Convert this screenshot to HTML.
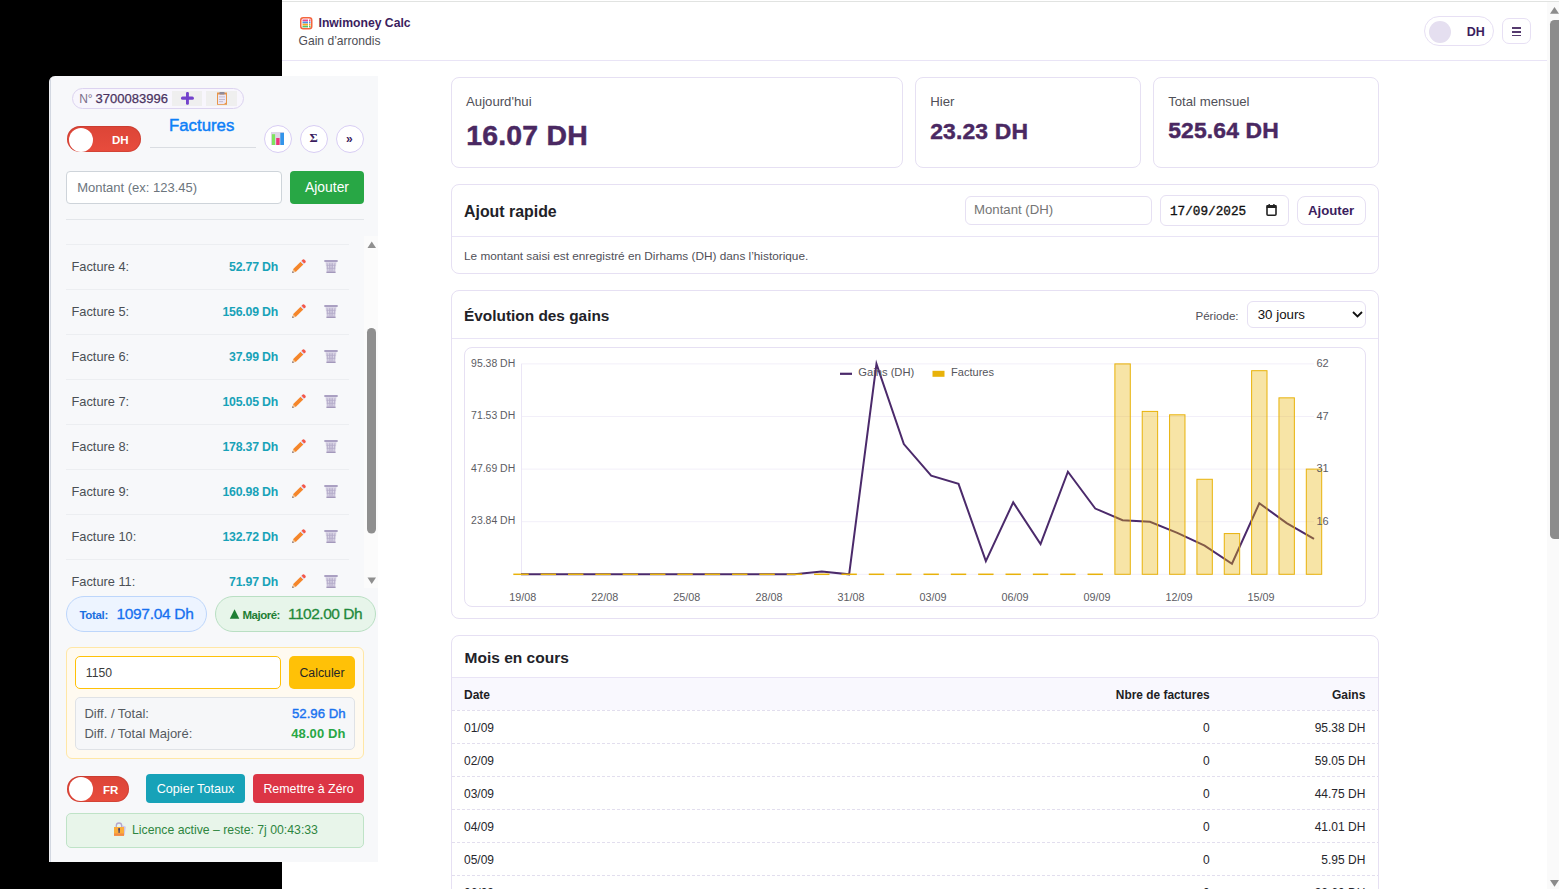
<!DOCTYPE html>
<html><head><meta charset="utf-8">
<style>
*{box-sizing:border-box;margin:0;padding:0}
html,body{width:1559px;height:889px;overflow:hidden;background:#fff;font-family:"Liberation Sans",sans-serif}
.abs{position:absolute}
.t{position:absolute;white-space:nowrap}
svg{position:absolute;left:0;top:0}
</style></head><body>

<div class="abs" style="left:0px;top:0px;width:282px;height:889px;background:#000"></div>
<div class="abs" style="left:282px;top:1px;width:1277px;height:1px;background:#e1e3e1"></div>
<div class="abs" style="left:282px;top:60px;width:1265px;height:1px;background:#e9e4f6"></div>
<svg width="1559" height="60" style="left:0;top:0">
<rect x="300.75" y="17.75" width="11" height="11" rx="2.5" fill="#fff" stroke="#f4653e" stroke-width="1.5"/>
<rect x="302.5" y="19.5" width="5.5" height="1.8" fill="#e8488a"/><rect x="309" y="19.5" width="1.5" height="1.8" fill="#e8488a"/>
<rect x="302.5" y="21.6" width="5.5" height="1.8" fill="#4a90e2"/><rect x="309" y="21.6" width="1.5" height="1.8" fill="#4a90e2"/>
<rect x="302.5" y="23.7" width="5.5" height="1.8" fill="#f5a623"/><rect x="309" y="23.7" width="1.5" height="1.8" fill="#f5a623"/>
<rect x="302.5" y="25.8" width="5.5" height="1.6" fill="#4cc26b"/><rect x="309" y="25.8" width="1.5" height="1.6" fill="#4cc26b"/>
</svg>
<div class="t" style="left:318.50px;top:16.17px;font-size:12.2px;line-height:15px;color:#3b1d5e;font-weight:bold;">Inwimoney Calc</div>
<div class="t" style="left:298.50px;top:34.10px;font-size:12.1px;line-height:15px;color:#4e4e55;">Gain d’arrondis</div>
<div class="abs" style="left:1424px;top:16px;width:70px;height:30px;border:1px solid #e7e0f4;border-radius:15px"></div>
<div class="abs" style="left:1429px;top:21px;width:22px;height:22px;border-radius:50%;background:#e5dff0"></div>
<div class="t" style="left:1466.70px;top:24.77px;font-size:12.5px;line-height:15px;color:#3b1d5e;font-weight:bold;">DH</div>
<div class="abs" style="left:1502px;top:18px;width:29px;height:26px;border:1px solid #e7e0f4;border-radius:7px"></div>
<div class="abs" style="left:1511.7px;top:27.2px;width:9.6px;height:1.6px;background:#553a6e"></div>
<div class="abs" style="left:1511.7px;top:31px;width:9.6px;height:1.6px;background:#553a6e"></div>
<div class="abs" style="left:1511.7px;top:34.7px;width:9.6px;height:1.6px;background:#553a6e"></div>
<div class="abs" style="left:451px;top:77px;width:452px;height:91px;border:1px solid #e6e0f3;border-radius:8px;background:#fff"></div>
<div class="abs" style="left:915px;top:77px;width:226px;height:91px;border:1px solid #e6e0f3;border-radius:8px;background:#fff"></div>
<div class="abs" style="left:1153px;top:77px;width:226px;height:91px;border:1px solid #e6e0f3;border-radius:8px;background:#fff"></div>
<div class="t" style="left:466.00px;top:93.92px;font-size:13.2px;line-height:16px;color:#505058;">Aujourd'hui</div>
<div class="t" style="left:466.30px;top:118.45px;font-size:28.4px;line-height:34px;color:#4a2862;font-weight:bold;letter-spacing:0.2px;-webkit-text-stroke:0.5px #4a2862;">16.07 DH</div>
<div class="t" style="left:930.20px;top:94.22px;font-size:13.2px;line-height:16px;color:#505058;">Hier</div>
<div class="t" style="left:930.20px;top:118.16px;font-size:22.9px;line-height:27px;color:#4a2862;font-weight:bold;letter-spacing:0.15px;-webkit-text-stroke:0.45px #4a2862;">23.23 DH</div>
<div class="t" style="left:1168.20px;top:94.22px;font-size:13.2px;line-height:16px;color:#505058;">Total mensuel</div>
<div class="t" style="left:1168.20px;top:117.36px;font-size:22.9px;line-height:27px;color:#4a2862;font-weight:bold;letter-spacing:0.15px;-webkit-text-stroke:0.45px #4a2862;">525.64 DH</div>
<div class="abs" style="left:451px;top:184px;width:928px;height:90px;border:1px solid #e6e0f3;border-radius:8px;background:#fff"></div>
<div class="abs" style="left:452px;top:236px;width:926px;height:1px;background:#e9e4f6"></div>
<div class="t" style="left:464.00px;top:201.99px;font-size:15.9px;line-height:19px;color:#222228;font-weight:bold;">Ajout rapide</div>
<div class="abs" style="left:965px;top:196px;width:187px;height:29px;border:1px solid #e6e0f3;border-radius:6px;background:#fff"></div>
<div class="t" style="left:974.00px;top:202.42px;font-size:13.2px;line-height:16px;color:#757575;">Montant (DH)</div>
<div class="abs" style="left:1160px;top:195px;width:129px;height:31px;border:1px solid #e6e0f3;border-radius:6px;background:#fff"></div>
<div class="t" style="left:1170.00px;top:204.32px;font-size:12.7px;line-height:15px;color:#111;font-family:'Liberation Mono',monospace;-webkit-text-stroke:0.35px #111;">17/09/2025</div>
<svg width="1559" height="889"><g fill="none" stroke="#222" stroke-width="1.6"><rect x="1267" y="206" width="9" height="9.2" rx="1"/></g><rect x="1266.5" y="205" width="10" height="3" fill="#222"/><rect x="1268.5" y="204" width="1.4" height="2" fill="#222"/><rect x="1273.2" y="204" width="1.4" height="2" fill="#222"/></svg>
<div class="abs" style="left:1297px;top:196px;width:69px;height:29px;border:1px solid #e6e0f3;border-radius:8px;background:#fff"></div>
<div class="t" style="left:1308.00px;top:202.62px;font-size:13.2px;line-height:16px;color:#3b1d5e;font-weight:bold;">Ajouter</div>
<div class="t" style="left:464.00px;top:249.21px;font-size:11.8px;line-height:14px;color:#505058;">Le montant saisi est enregistré en Dirhams (DH) dans l’historique.</div>
<div class="abs" style="left:451px;top:290px;width:928px;height:329px;border:1px solid #e6e0f3;border-radius:8px;background:#fff"></div>
<div class="abs" style="left:452px;top:338px;width:926px;height:1px;background:#e9e4f6"></div>
<div class="t" style="left:464.00px;top:306.66px;font-size:15.4px;line-height:18px;color:#222228;font-weight:bold;">Évolution des gains</div>
<div class="t" style="left:638.60px;width:600px;text-align:right;top:308.88px;font-size:11.6px;line-height:14px;color:#505058;">Période:</div>
<div class="abs" style="left:1247px;top:301px;width:119px;height:27px;border:1px solid #e6e0f3;border-radius:6px;background:#fff"></div>
<div class="t" style="left:1257.70px;top:307.19px;font-size:13.3px;line-height:16px;color:#111;">30 jours</div>
<svg width="1559" height="889"><path d="M1353 312 L1357.5 316.5 L1362 312" fill="none" stroke="#111" stroke-width="1.8"/></svg>
<div class="abs" style="left:464px;top:347px;width:902px;height:260px;border:1px solid #e6e0f3;border-radius:8px;background:#fff"></div>
<svg width="1559" height="889">
<line x1="521" y1="363.9" x2="1314" y2="363.9" stroke="#f2eff9" stroke-width="1"/>
<line x1="521" y1="416.5" x2="1314" y2="416.5" stroke="#f2eff9" stroke-width="1"/>
<line x1="521" y1="469.1" x2="1314" y2="469.1" stroke="#f2eff9" stroke-width="1"/>
<line x1="521" y1="521.7" x2="1314" y2="521.7" stroke="#f2eff9" stroke-width="1"/>
<line x1="521" y1="574.3" x2="1314" y2="574.3" stroke="#f2eff9" stroke-width="1"/>
<line x1="521.5" y1="364" x2="521.5" y2="574.5" stroke="#ebe6f6" stroke-width="1"/>
<polyline points="521.00,574.30 548.34,574.30 575.69,574.30 603.03,574.30 630.38,574.30 657.72,574.30 685.07,574.30 712.41,574.30 739.76,574.30 767.10,574.30 794.45,574.30 821.79,571.50 849.14,574.30 876.48,363.90 903.83,444.04 931.17,475.59 958.52,483.84 985.86,561.17 1013.21,502.39 1040.55,544.08 1067.90,471.73 1095.24,508.56 1122.59,520.26 1149.93,521.80 1177.28,532.83 1204.62,545.62 1231.97,563.71 1259.31,503.27 1286.66,523.06 1314.00,538.85" fill="none" stroke="#4b2a6b" stroke-width="2" stroke-linejoin="miter" stroke-miterlimit="10"/>
<line x1="513.30" y1="574.3" x2="528.70" y2="574.3" stroke="#e8b20a" stroke-width="1.5"/>
<line x1="540.64" y1="574.3" x2="556.04" y2="574.3" stroke="#e8b20a" stroke-width="1.5"/>
<line x1="567.99" y1="574.3" x2="583.39" y2="574.3" stroke="#e8b20a" stroke-width="1.5"/>
<line x1="595.33" y1="574.3" x2="610.73" y2="574.3" stroke="#e8b20a" stroke-width="1.5"/>
<line x1="622.68" y1="574.3" x2="638.08" y2="574.3" stroke="#e8b20a" stroke-width="1.5"/>
<line x1="650.02" y1="574.3" x2="665.42" y2="574.3" stroke="#e8b20a" stroke-width="1.5"/>
<line x1="677.37" y1="574.3" x2="692.77" y2="574.3" stroke="#e8b20a" stroke-width="1.5"/>
<line x1="704.71" y1="574.3" x2="720.11" y2="574.3" stroke="#e8b20a" stroke-width="1.5"/>
<line x1="732.06" y1="574.3" x2="747.46" y2="574.3" stroke="#e8b20a" stroke-width="1.5"/>
<line x1="759.40" y1="574.3" x2="774.80" y2="574.3" stroke="#e8b20a" stroke-width="1.5"/>
<line x1="786.75" y1="574.3" x2="802.15" y2="574.3" stroke="#e8b20a" stroke-width="1.5"/>
<line x1="814.09" y1="574.3" x2="829.49" y2="574.3" stroke="#e8b20a" stroke-width="1.5"/>
<line x1="841.44" y1="574.3" x2="856.84" y2="574.3" stroke="#e8b20a" stroke-width="1.5"/>
<line x1="868.78" y1="574.3" x2="884.18" y2="574.3" stroke="#e8b20a" stroke-width="1.5"/>
<line x1="896.13" y1="574.3" x2="911.53" y2="574.3" stroke="#e8b20a" stroke-width="1.5"/>
<line x1="923.47" y1="574.3" x2="938.87" y2="574.3" stroke="#e8b20a" stroke-width="1.5"/>
<line x1="950.82" y1="574.3" x2="966.22" y2="574.3" stroke="#e8b20a" stroke-width="1.5"/>
<line x1="978.16" y1="574.3" x2="993.56" y2="574.3" stroke="#e8b20a" stroke-width="1.5"/>
<line x1="1005.51" y1="574.3" x2="1020.91" y2="574.3" stroke="#e8b20a" stroke-width="1.5"/>
<line x1="1032.85" y1="574.3" x2="1048.25" y2="574.3" stroke="#e8b20a" stroke-width="1.5"/>
<line x1="1060.20" y1="574.3" x2="1075.60" y2="574.3" stroke="#e8b20a" stroke-width="1.5"/>
<line x1="1087.54" y1="574.3" x2="1102.94" y2="574.3" stroke="#e8b20a" stroke-width="1.5"/>
<rect x="1114.89" y="363.90" width="15.4" height="210.40" fill="rgba(234,179,8,0.36)" stroke="#e8b20a" stroke-width="1"/>
<rect x="1142.23" y="411.41" width="15.4" height="162.89" fill="rgba(234,179,8,0.36)" stroke="#e8b20a" stroke-width="1"/>
<rect x="1169.58" y="414.80" width="15.4" height="159.50" fill="rgba(234,179,8,0.36)" stroke="#e8b20a" stroke-width="1"/>
<rect x="1196.92" y="479.28" width="15.4" height="95.02" fill="rgba(234,179,8,0.36)" stroke="#e8b20a" stroke-width="1"/>
<rect x="1224.27" y="533.58" width="15.4" height="40.72" fill="rgba(234,179,8,0.36)" stroke="#e8b20a" stroke-width="1"/>
<rect x="1251.61" y="370.69" width="15.4" height="203.61" fill="rgba(234,179,8,0.36)" stroke="#e8b20a" stroke-width="1"/>
<rect x="1278.96" y="397.84" width="15.4" height="176.46" fill="rgba(234,179,8,0.36)" stroke="#e8b20a" stroke-width="1"/>
<rect x="1306.30" y="469.10" width="15.4" height="105.20" fill="rgba(234,179,8,0.36)" stroke="#e8b20a" stroke-width="1"/>
<rect x="840" y="372.7" width="12" height="2.2" fill="#4b2a6b"/>
<rect x="932.5" y="370.8" width="12" height="6" fill="#e8b20a"/>
</svg>
<div class="t" style="left:858.30px;top:366.42px;font-size:11.2px;line-height:13px;color:#55555c;">Gains (DH)</div>
<div class="t" style="left:951.00px;top:366.47px;font-size:11.05px;line-height:13px;color:#55555c;">Factures</div>
<div class="t" style="left:-84.80px;width:600px;text-align:right;top:356.68px;font-size:10.45px;line-height:13px;color:#5c5c63;">95.38 DH</div>
<div class="t" style="left:-84.80px;width:600px;text-align:right;top:409.28px;font-size:10.45px;line-height:13px;color:#5c5c63;">71.53 DH</div>
<div class="t" style="left:-84.80px;width:600px;text-align:right;top:461.88px;font-size:10.45px;line-height:13px;color:#5c5c63;">47.69 DH</div>
<div class="t" style="left:-84.80px;width:600px;text-align:right;top:514.48px;font-size:10.45px;line-height:13px;color:#5c5c63;">23.84 DH</div>
<div class="t" style="left:1316.40px;top:357.29px;font-size:11px;line-height:13px;color:#5c5c63;">62</div>
<div class="t" style="left:1316.40px;top:409.89px;font-size:11px;line-height:13px;color:#5c5c63;">47</div>
<div class="t" style="left:1316.40px;top:462.49px;font-size:11px;line-height:13px;color:#5c5c63;">31</div>
<div class="t" style="left:1316.40px;top:515.09px;font-size:11px;line-height:13px;color:#5c5c63;">16</div>
<div class="t" style="left:222.80px;width:600px;text-align:center;top:590.76px;font-size:10.8px;line-height:13px;color:#5c5c63;">19/08</div>
<div class="t" style="left:304.83px;width:600px;text-align:center;top:590.76px;font-size:10.8px;line-height:13px;color:#5c5c63;">22/08</div>
<div class="t" style="left:386.87px;width:600px;text-align:center;top:590.76px;font-size:10.8px;line-height:13px;color:#5c5c63;">25/08</div>
<div class="t" style="left:468.90px;width:600px;text-align:center;top:590.76px;font-size:10.8px;line-height:13px;color:#5c5c63;">28/08</div>
<div class="t" style="left:550.94px;width:600px;text-align:center;top:590.76px;font-size:10.8px;line-height:13px;color:#5c5c63;">31/08</div>
<div class="t" style="left:632.97px;width:600px;text-align:center;top:590.76px;font-size:10.8px;line-height:13px;color:#5c5c63;">03/09</div>
<div class="t" style="left:715.01px;width:600px;text-align:center;top:590.76px;font-size:10.8px;line-height:13px;color:#5c5c63;">06/09</div>
<div class="t" style="left:797.04px;width:600px;text-align:center;top:590.76px;font-size:10.8px;line-height:13px;color:#5c5c63;">09/09</div>
<div class="t" style="left:879.08px;width:600px;text-align:center;top:590.76px;font-size:10.8px;line-height:13px;color:#5c5c63;">12/09</div>
<div class="t" style="left:961.11px;width:600px;text-align:center;top:590.76px;font-size:10.8px;line-height:13px;color:#5c5c63;">15/09</div>
<div class="abs" style="left:451px;top:635px;width:928px;height:300px;border:1px solid #e6e0f3;border-radius:8px;background:#fff"></div>
<div class="abs" style="left:452px;top:677px;width:926px;height:33px;background:#f9f8fe;border-top:1px solid #e9e4f6"></div>
<div class="t" style="left:464.60px;top:648.13px;font-size:15.5px;line-height:19px;color:#222228;font-weight:bold;">Mois en cours</div>
<div class="t" style="left:464.00px;top:687.84px;font-size:12px;line-height:14px;color:#1e1e24;font-weight:bold;">Date</div>
<div class="t" style="left:609.70px;width:600px;text-align:right;top:687.87px;font-size:11.9px;line-height:14px;color:#1e1e24;font-weight:bold;">Nbre de factures</div>
<div class="t" style="left:765.40px;width:600px;text-align:right;top:687.84px;font-size:12px;line-height:14px;color:#1e1e24;font-weight:bold;">Gains</div>
<div class="abs" style="left:452px;top:710px;width:926px;height:1px;background-image:linear-gradient(90deg,#e2deee 60%,transparent 60%);background-size:5px 1px"></div>
<div class="t" style="left:464.00px;top:720.74px;font-size:12px;line-height:14px;color:#26262c;">01/09</div>
<div class="t" style="left:609.70px;width:600px;text-align:right;top:720.74px;font-size:12px;line-height:14px;color:#26262c;">0</div>
<div class="t" style="left:765.40px;width:600px;text-align:right;top:720.74px;font-size:12px;line-height:14px;color:#26262c;">95.38 DH</div>
<div class="abs" style="left:452px;top:743px;width:926px;height:1px;background-image:linear-gradient(90deg,#e2deee 60%,transparent 60%);background-size:5px 1px"></div>
<div class="t" style="left:464.00px;top:753.74px;font-size:12px;line-height:14px;color:#26262c;">02/09</div>
<div class="t" style="left:609.70px;width:600px;text-align:right;top:753.74px;font-size:12px;line-height:14px;color:#26262c;">0</div>
<div class="t" style="left:765.40px;width:600px;text-align:right;top:753.74px;font-size:12px;line-height:14px;color:#26262c;">59.05 DH</div>
<div class="abs" style="left:452px;top:776px;width:926px;height:1px;background-image:linear-gradient(90deg,#e2deee 60%,transparent 60%);background-size:5px 1px"></div>
<div class="t" style="left:464.00px;top:786.74px;font-size:12px;line-height:14px;color:#26262c;">03/09</div>
<div class="t" style="left:609.70px;width:600px;text-align:right;top:786.74px;font-size:12px;line-height:14px;color:#26262c;">0</div>
<div class="t" style="left:765.40px;width:600px;text-align:right;top:786.74px;font-size:12px;line-height:14px;color:#26262c;">44.75 DH</div>
<div class="abs" style="left:452px;top:809px;width:926px;height:1px;background-image:linear-gradient(90deg,#e2deee 60%,transparent 60%);background-size:5px 1px"></div>
<div class="t" style="left:464.00px;top:819.74px;font-size:12px;line-height:14px;color:#26262c;">04/09</div>
<div class="t" style="left:609.70px;width:600px;text-align:right;top:819.74px;font-size:12px;line-height:14px;color:#26262c;">0</div>
<div class="t" style="left:765.40px;width:600px;text-align:right;top:819.74px;font-size:12px;line-height:14px;color:#26262c;">41.01 DH</div>
<div class="abs" style="left:452px;top:842px;width:926px;height:1px;background-image:linear-gradient(90deg,#e2deee 60%,transparent 60%);background-size:5px 1px"></div>
<div class="t" style="left:464.00px;top:852.74px;font-size:12px;line-height:14px;color:#26262c;">05/09</div>
<div class="t" style="left:609.70px;width:600px;text-align:right;top:852.74px;font-size:12px;line-height:14px;color:#26262c;">0</div>
<div class="t" style="left:765.40px;width:600px;text-align:right;top:852.74px;font-size:12px;line-height:14px;color:#26262c;">5.95 DH</div>
<div class="abs" style="left:452px;top:875px;width:926px;height:1px;background-image:linear-gradient(90deg,#e2deee 60%,transparent 60%);background-size:5px 1px"></div>
<div class="t" style="left:464.00px;top:885.74px;font-size:12px;line-height:14px;color:#26262c;">06/09</div>
<div class="t" style="left:609.70px;width:600px;text-align:right;top:885.74px;font-size:12px;line-height:14px;color:#26262c;">0</div>
<div class="t" style="left:765.40px;width:600px;text-align:right;top:885.74px;font-size:12px;line-height:14px;color:#26262c;">32.60 DH</div>
<div class="abs" style="left:49px;top:76px;width:329px;height:786px;background:#f7f8fa;border-top-left-radius:6px;border-left:1px solid #eeeff3"></div>
<div class="abs" style="left:50px;top:79px;width:1px;height:783px;background:#d3d8e1"></div>
<div class="abs" style="left:72px;top:88px;width:172px;height:21px;border:1px solid #dcd3f0;border-radius:11px;background:#f8f6fd"></div>
<div class="t" style="left:79.20px;top:92.14px;font-size:12px;line-height:14px;color:#7a6e8a;">N°</div>
<div class="t" style="left:95.60px;top:90.79px;font-size:13px;line-height:16px;color:#4a3260;-webkit-text-stroke:0.25px #4a3260;">3700083996</div>
<div class="abs" style="left:172px;top:91px;width:30px;height:15px;background:#efefef"></div>
<div class="abs" style="left:206px;top:91px;width:31px;height:15px;background:#efefef"></div>
<svg width="1559" height="889">
<rect x="186" y="92" width="2.9" height="12.8" rx="1.2" fill="#7443cc"/>
<rect x="181" y="96.4" width="12.9" height="3.4" rx="1.5" fill="#7443cc"/>
<rect x="217" y="92.5" width="10" height="12.3" fill="#e8964a"/>
<path d="M218 94.5 H226 V102.5 L224 104 H218 Z" fill="#ebe6f5"/>
<rect x="219.3" y="92" width="5.4" height="2.6" rx="1" fill="#8e8a99"/>
<rect x="219" y="96.5" width="6" height="0.8" fill="#b9b3c6"/>
<rect x="219" y="99" width="6" height="0.8" fill="#b9b3c6"/>
<rect x="219" y="101.3" width="4" height="0.8" fill="#b9b3c6"/>
</svg>
<div class="abs" style="left:67px;top:126px;width:74px;height:26px;border-radius:13px;background:linear-gradient(#dc4537,#e84c3d);box-shadow:inset 0 0 0 1px rgba(150,40,30,0.25)"></div>
<div class="abs" style="left:69px;top:127.5px;width:24px;height:24px;border-radius:50%;background:#fff"></div>
<div class="t" style="left:112.00px;top:132.51px;font-size:11.5px;line-height:14px;color:#fff;font-weight:bold;">DH</div>
<div class="t" style="left:169.00px;top:116.38px;font-size:16.8px;line-height:20px;color:#0d7ff7;-webkit-text-stroke:0.45px #0d7ff7;">Factures</div>
<div class="abs" style="left:150px;top:147px;width:106px;height:1px;background:#dadde2"></div>
<div class="abs" style="left:264px;top:125px;width:28px;height:28px;border:1px solid #d8cdf4;border-radius:50%;background:#fff"></div>
<div class="abs" style="left:300px;top:125px;width:28px;height:28px;border:1px solid #d8cdf4;border-radius:50%;background:#fff"></div>
<div class="abs" style="left:336px;top:125px;width:28px;height:28px;border:1px solid #d8cdf4;border-radius:50%;background:#fff"></div>
<svg width="1559" height="889">
<rect x="271" y="132" width="13" height="13" fill="#ddd6e6"/>
<rect x="271.9" y="134.2" width="3.2" height="10.8" fill="#7ee45e"/>
<rect x="276.2" y="138" width="3.4" height="7" fill="#ee3478"/>
<rect x="280.3" y="132.8" width="3.7" height="12.2" fill="#3394ea"/>
</svg>
<div class="t" style="left:309.60px;top:131.13px;font-size:12.6px;line-height:15px;color:#3b1d5e;font-weight:bold;font-family:'Liberation Serif',serif;">Σ</div>
<div class="t" style="left:346.00px;top:131.84px;font-size:12px;line-height:14px;color:#3b1d5e;font-weight:bold;">»</div>
<div class="abs" style="left:66px;top:171px;width:216px;height:33px;border:1px solid #ced4da;border-radius:4px;background:#fff"></div>
<div class="t" style="left:77.20px;top:179.89px;font-size:13px;line-height:16px;color:#6c757d;">Montant (ex: 123.45)</div>
<div class="abs" style="left:290px;top:171px;width:74px;height:33px;border-radius:4px;background:#28a745"></div>
<div class="t" style="left:27.00px;width:600px;text-align:center;top:178.88px;font-size:13.9px;line-height:17px;color:#fff;">Ajouter</div>
<div class="abs" style="left:66px;top:219px;width:298px;height:1px;background:#e3e6ea"></div>
<div class="abs" style="left:364px;top:236px;width:14px;height:352px;background:#fbfbfb"></div>
<svg width="1559" height="889">
<path d="M367.5 248 L371.75 241.5 L376 248 Z" fill="#8f8f8f"/>
<path d="M367.5 577.5 L371.75 584 L376 577.5 Z" fill="#8f8f8f"/>
<rect x="367" y="328" width="9" height="205.5" rx="4.5" fill="#8f8f8f"/>
<defs>
<g id="pen">
<path d="M0.3 13.7 L1.0 10.3 L3.7 13.0 Z" fill="#f0c28e"/>
<path d="M0.3 13.7 L0.6 12.2 L1.8 13.4 Z" fill="#3b2a40"/>
<path d="M1.0 10.3 L8.6 2.7 L11.3 5.4 L3.7 13.0 Z" fill="#f5862a"/>
<path d="M8.6 2.7 L9.5 1.8 L12.2 4.5 L11.3 5.4 Z" fill="#dcd6f0"/>
<path d="M9.5 1.8 L10.8 0.5 Q11.5 -0.1 12.2 0.5 L13.5 1.8 Q14.1 2.5 13.5 3.2 L12.2 4.5 Z" fill="#f2574a"/>
</g>
<g id="bin">
<path d="M1.4 2.2 H12.6 L11.4 13 H2.6 Z" fill="#ddd8e8"/>
<path d="M3 3.5 L4 12 M5.3 3.5 L5.8 12 M7 3.5 V12 M8.7 3.5 L8.2 12 M11 3.5 L10 12 M2.5 6 H11.5 M2.8 9 H11.2" stroke="#b2a9c8" stroke-width="0.8" fill="none"/>
<rect x="0.3" y="0.6" width="13.4" height="2.2" rx="0.6" fill="#aaa0c2"/>
<rect x="2.4" y="12.2" width="9.2" height="1.5" rx="0.5" fill="#a398bb"/>
</g>
</defs>
<use href="#pen" x="292" y="259"/><use href="#bin" x="324" y="259.3"/><use href="#pen" x="292" y="304"/><use href="#bin" x="324" y="304.3"/><use href="#pen" x="292" y="349"/><use href="#bin" x="324" y="349.3"/><use href="#pen" x="292" y="394"/><use href="#bin" x="324" y="394.3"/><use href="#pen" x="292" y="439"/><use href="#bin" x="324" y="439.3"/><use href="#pen" x="292" y="484"/><use href="#bin" x="324" y="484.3"/><use href="#pen" x="292" y="529"/><use href="#bin" x="324" y="529.3"/><use href="#pen" x="292" y="574"/><use href="#bin" x="324" y="574.3"/></svg>
<div class="abs" style="left:66px;top:244px;width:283px;height:1px;background:#eceef1"></div>
<div class="t" style="left:71.50px;top:258.86px;font-size:12.8px;line-height:15px;color:#4a4f55;">Facture 4:</div>
<div class="t" style="left:-322.00px;width:600px;text-align:right;top:259.84px;font-size:12.3px;line-height:15px;color:#17a2b8;font-weight:bold;letter-spacing:-0.2px;">52.77 Dh</div>
<div class="abs" style="left:66px;top:289px;width:283px;height:1px;background:#eceef1"></div>
<div class="t" style="left:71.50px;top:303.86px;font-size:12.8px;line-height:15px;color:#4a4f55;">Facture 5:</div>
<div class="t" style="left:-322.00px;width:600px;text-align:right;top:304.84px;font-size:12.3px;line-height:15px;color:#17a2b8;font-weight:bold;letter-spacing:-0.2px;">156.09 Dh</div>
<div class="abs" style="left:66px;top:334px;width:283px;height:1px;background:#eceef1"></div>
<div class="t" style="left:71.50px;top:348.86px;font-size:12.8px;line-height:15px;color:#4a4f55;">Facture 6:</div>
<div class="t" style="left:-322.00px;width:600px;text-align:right;top:349.84px;font-size:12.3px;line-height:15px;color:#17a2b8;font-weight:bold;letter-spacing:-0.2px;">37.99 Dh</div>
<div class="abs" style="left:66px;top:379px;width:283px;height:1px;background:#eceef1"></div>
<div class="t" style="left:71.50px;top:393.86px;font-size:12.8px;line-height:15px;color:#4a4f55;">Facture 7:</div>
<div class="t" style="left:-322.00px;width:600px;text-align:right;top:394.84px;font-size:12.3px;line-height:15px;color:#17a2b8;font-weight:bold;letter-spacing:-0.2px;">105.05 Dh</div>
<div class="abs" style="left:66px;top:424px;width:283px;height:1px;background:#eceef1"></div>
<div class="t" style="left:71.50px;top:438.86px;font-size:12.8px;line-height:15px;color:#4a4f55;">Facture 8:</div>
<div class="t" style="left:-322.00px;width:600px;text-align:right;top:439.84px;font-size:12.3px;line-height:15px;color:#17a2b8;font-weight:bold;letter-spacing:-0.2px;">178.37 Dh</div>
<div class="abs" style="left:66px;top:469px;width:283px;height:1px;background:#eceef1"></div>
<div class="t" style="left:71.50px;top:483.86px;font-size:12.8px;line-height:15px;color:#4a4f55;">Facture 9:</div>
<div class="t" style="left:-322.00px;width:600px;text-align:right;top:484.84px;font-size:12.3px;line-height:15px;color:#17a2b8;font-weight:bold;letter-spacing:-0.2px;">160.98 Dh</div>
<div class="abs" style="left:66px;top:514px;width:283px;height:1px;background:#eceef1"></div>
<div class="t" style="left:71.50px;top:528.86px;font-size:12.8px;line-height:15px;color:#4a4f55;">Facture 10:</div>
<div class="t" style="left:-322.00px;width:600px;text-align:right;top:529.84px;font-size:12.3px;line-height:15px;color:#17a2b8;font-weight:bold;letter-spacing:-0.2px;">132.72 Dh</div>
<div class="abs" style="left:66px;top:559px;width:283px;height:1px;background:#eceef1"></div>
<div class="t" style="left:71.50px;top:573.86px;font-size:12.8px;line-height:15px;color:#4a4f55;">Facture 11:</div>
<div class="t" style="left:-322.00px;width:600px;text-align:right;top:574.84px;font-size:12.3px;line-height:15px;color:#17a2b8;font-weight:bold;letter-spacing:-0.2px;">71.97 Dh</div>
<div class="abs" style="left:66px;top:596px;width:141px;height:36px;border:1px solid #bdd6fb;border-radius:18px;background:#edf4ff"></div>
<div class="t" style="left:79.40px;top:607.71px;font-size:11.5px;line-height:14px;color:#1a6fe0;font-weight:bold;letter-spacing:-0.3px;">Total:</div>
<div class="t" style="left:116.40px;top:604.43px;font-size:15.5px;line-height:19px;color:#1670f0;letter-spacing:-0.3px;-webkit-text-stroke:0.3px #1670f0;">1097.04 Dh</div>
<div class="abs" style="left:215px;top:596px;width:161px;height:36px;border:1px solid #b9dfc3;border-radius:18px;background:#e7f5ea"></div>
<svg width="1559" height="889"><path d="M229.8 618.7 L239.3 618.7 L234.55 609.2 Z" fill="#1e7e34"/></svg>
<div class="t" style="left:242.50px;top:607.71px;font-size:11.5px;line-height:14px;color:#1e7e34;font-weight:bold;letter-spacing:-0.5px;">Majoré:</div>
<div class="t" style="left:288.00px;top:604.43px;font-size:15.5px;line-height:19px;color:#1f8a3c;letter-spacing:-0.5px;-webkit-text-stroke:0.3px #1f8a3c;">1102.00 Dh</div>
<div class="abs" style="left:66px;top:647px;width:298px;height:112px;border:1px solid #ffe7a6;border-radius:6px;background:#fffaf0"></div>
<div class="abs" style="left:75px;top:656px;width:206px;height:33px;border:1px solid #ffc107;border-radius:5px;background:#fff"></div>
<div class="t" style="left:85.80px;top:665.57px;font-size:12.2px;line-height:15px;color:#3a3a3a;">1150</div>
<div class="abs" style="left:289px;top:656px;width:66px;height:33px;border-radius:5px;background:#ffc107"></div>
<div class="t" style="left:22.00px;width:600px;text-align:center;top:665.54px;font-size:12.3px;line-height:15px;color:#262626;">Calculer</div>
<div class="abs" style="left:75px;top:697px;width:280px;height:53px;border:1px solid #dfe2e6;border-radius:5px;background:#f6f7f9"></div>
<div class="t" style="left:84.40px;top:706.49px;font-size:13px;line-height:16px;color:#555a60;">Diff. / Total:</div>
<div class="t" style="left:-254.50px;width:600px;text-align:right;top:706.42px;font-size:13.2px;line-height:16px;color:#1a73f0;-webkit-text-stroke:0.4px #1a73f0;">52.96 Dh</div>
<div class="t" style="left:84.40px;top:726.49px;font-size:13px;line-height:16px;color:#555a60;">Diff. / Total Majoré:</div>
<div class="t" style="left:-254.50px;width:600px;text-align:right;top:726.49px;font-size:13px;line-height:16px;color:#28a745;font-weight:bold;letter-spacing:0.1px;">48.00 Dh</div>
<div class="abs" style="left:67px;top:776px;width:62px;height:26px;border-radius:13px;background:linear-gradient(#dc4537,#e84c3d);box-shadow:inset 0 0 0 1px rgba(150,40,30,0.25)"></div>
<div class="abs" style="left:69px;top:777px;width:24px;height:24px;border-radius:50%;background:#fff"></div>
<div class="t" style="left:103.00px;top:783.01px;font-size:11.5px;line-height:14px;color:#fff;font-weight:bold;">FR</div>
<div class="abs" style="left:146px;top:774px;width:99px;height:29px;border-radius:4px;background:#17a2b8"></div>
<div class="t" style="left:-104.50px;width:600px;text-align:center;top:781.93px;font-size:12.6px;line-height:15px;color:#fff;">Copier Totaux</div>
<div class="abs" style="left:253px;top:774px;width:111px;height:29px;border-radius:4px;background:#dc3545"></div>
<div class="t" style="left:8.50px;width:600px;text-align:center;top:782.00px;font-size:12.4px;line-height:15px;color:#fff;">Remettre à Zéro</div>
<div class="abs" style="left:66px;top:813px;width:298px;height:35px;border:1px solid #bfe3c7;border-radius:5px;background:#e8f5ea"></div>
<svg width="1559" height="889">
<path d="M116.3 827.5 V825.8 Q116.3 823 119 823 Q121.7 823 121.7 825.8 V827.5" fill="none" stroke="#b3a6cc" stroke-width="1.3"/>
<path d="M122 825.2 L125.8 826.8 L124.6 835.2 L122.5 835 Z" fill="#cfc4e6"/>
<rect x="114" y="827" width="10" height="8.8" fill="#fbad3a"/>
<rect x="114" y="833.5" width="10" height="2.3" fill="#f28a46"/>
<path d="M118.3 829.6 a1 1 0 1 1 1.6 0 L119.6 833 H118.6 Z" fill="#3c3a70"/>
</svg>
<div class="t" style="left:132.00px;top:823.15px;font-size:12.25px;line-height:15px;color:#2e8540;">Licence active – reste: 7j 00:43:33</div>
<div class="abs" style="left:1547px;top:2px;width:12px;height:887px;background:#fafafa"></div>
<svg width="1559" height="889">
<path d="M1550 13.7 L1554.5 7 L1559 13.7 Z" fill="#8c8c8c"/>
<rect x="1550" y="20" width="9" height="519" rx="4.5" fill="#8c8c8c"/>
<rect x="1554.5" y="20" width="4.5" height="519" fill="#8c8c8c"/>
<path d="M1550 880 L1554.5 886.7 L1559 880 Z" fill="#8c8c8c"/>
</svg>
</body></html>
